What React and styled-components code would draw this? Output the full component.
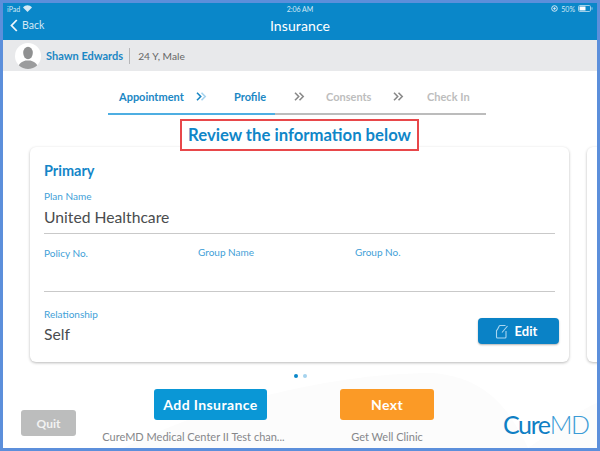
import React from "react";
import styled, { createGlobalStyle } from "styled-components";

const Global = createGlobalStyle`
  html, body { margin: 0; padding: 0; background: #fff; }
  body { font-family: "Lato", "Liberation Sans", sans-serif; }
  * { box-sizing: border-box; }
`;

const Frame = styled.div`
  width: 600px; height: 451px; border: 3px solid #5c8fdb; overflow: hidden;
  display: flex; flex-direction: column; position: relative;
  background: #fff;
`;
const Decor = styled.svg`
  position: absolute; left: 0; bottom: 0; width: 594px; height: 90px; pointer-events: none;
`;
const Header = styled.header`
  height: 37px; background: #0a87c9; color: #fff; flex: none; padding: 0 6px;
  display: flex; flex-direction: column; position: relative;
`;
const Status = styled.div`
  height: 11px; display: grid; grid-template-columns: 1fr auto 1fr; align-items: center;
  font-size: 7px; color: #d5e9f5; margin: 0 -2px;
`;
const StatusLeft = styled.div`display: flex; align-items: center; gap: 3px;`;
const StatusRight = styled.div`display: flex; align-items: center; gap: 3px; justify-content: flex-end;`;
const Nav = styled.div`
  flex: 1; display: grid; grid-template-columns: 1fr auto 1fr; align-items: center; padding-bottom: 4px;
`;
const Back = styled.div`display: flex; align-items: center; gap: 4px; font-size: 10.5px; color: #d5e9f5; padding-left: 1px;`;
const Title = styled.div`font-size: 14px; letter-spacing: 0.1px; color: #fff; margin-top: 1px;`;

const PatientBar = styled.div`
  height: 31px; background: #e8e9eb; flex: none; display: flex; align-items: center; padding-left: 12px;
`;
const Avatar = styled.div`
  width: 26px; height: 26px; border-radius: 50%; background: #fff; overflow: hidden; flex: none;
`;
const PatientName = styled.div`
  font-size: 11px; font-weight: 700; color: #1b87c4; margin-left: 5px; padding-right: 6px; line-height: 16px;
`;
const PatientMeta = styled.div`
  font-size: 10.2px; color: #666; border-left: 1px solid #b5b6b8; padding-left: 8px; line-height: 16px;
`;

const Stepper = styled.div`
  margin: 15px 0 0 105px; width: 378px; height: 29px; flex: none; display: grid;
  grid-template-columns: 167px 1fr;
`;
const StepRow = styled.div`
  grid-column: 1 / 3; grid-row: 1; display: flex; align-items: flex-start; height: 27px; padding: 3px 0 0 11px;
`;
const Step = styled.div`
  font-size: 11px; font-weight: 700; color: ${p => (p.$active ? "#1b87c4" : "#bdbdbd")};
  width: ${p => p.$w}px; margin-left: ${p => p.$ml || 0}px; line-height: 15px; white-space: nowrap;
`;
const Chev = styled.svg`flex: none; margin: 3px 0 0 0; width: 11px; height: 9px;`;
const LineOn = styled.div`grid-column: 1; grid-row: 1; align-self: end; height: 2px; background: #4eaee2;`;
const LineOff = styled.div`grid-column: 2; grid-row: 1; align-self: end; height: 2px; background: #bcbcbc;`;

const Notice = styled.div`
  flex: none; align-self: flex-start; margin: 4px 0 0 177px; width: 239px; height: 32px; border: 2px solid #e8474a;
  font-size: 16.7px; font-weight: 700; color: #0f86c8; text-align: center; line-height: 29px; position: relative; z-index: 2; background: #fff;
  white-space: nowrap;
`;
const Carousel = styled.div`
  flex: none; display: flex; gap: 18px; margin: -4px 0 0 27px; height: 215px;
`;
const Card = styled.section`
  width: 539px; flex: none; height: 215px; background: #fff; border-radius: 6px; padding: 15px 14px 0 14px;
  box-shadow: 0 1px 3px rgba(0,0,0,0.28); display: flex; flex-direction: column;
`;
const Peek = styled.div`
  width: 40px; flex: none; height: 215px; background: #fff; border-radius: 6px; box-shadow: 0 1px 3px rgba(0,0,0,0.28);
`;
const CardHead = styled.div`font-size: 14.5px; font-weight: 700; color: #1486c8; line-height: 17px;`;
const Label = styled.div`font-size: 10px; color: #3f9fd8; line-height: 12px; padding-top: ${p => p.$pt || 0}px;`;
const Value = styled.div`font-size: 15.7px; color: #4a4c4e; line-height: 20px; margin-top: ${p => p.$mt || 0}px;`;
const Field = styled.div`
  border-bottom: 1px solid #c9c9c9;
  margin-top: 11px;
  height: 44px;
`;
const Columns = styled.div`
  display: grid; grid-template-columns: 154px 157px 1fr; height: 58px; border-bottom: 1px solid #c9c9c9; padding-top: 12px;
`;
const BottomRow = styled.div`display: flex; justify-content: space-between; margin-top: 16px;`;
const EditButton = styled.div`
  width: 81px; height: 26px; background: #0a82c6; border-radius: 4px; color: #fff; font-size: 13px; font-weight: 700;
  display: flex; align-items: center; justify-content: center; gap: 6px; padding-right: 5px; margin: 10px -4px 0 0; box-shadow: 0 1px 2px rgba(0,0,0,0.3);
`;
const Dots = styled.div`flex: none; display: flex; justify-content: center; gap: 5px; height: 27px; padding: 12px 0 0 0; width: 594px;`;
const Dot = styled.div`
  width: 4px; height: 4px; border-radius: 50%; background: ${p => (p.$on ? "#0a87c9" : "#a5d3ee")};
`;
const Footer = styled.footer`
  flex: 1; display: grid; grid-template-columns: 55px 25px 185px 54px 94px 69px 83px; padding-left: 18px; position: relative;
`;
const QuitCell = styled.div`grid-column: 1; padding-top: 21px;`;
const Quit = styled.div`
  width: 55px; height: 26px; background: #bcbdbd; border-radius: 3px; color: #f2f2f2; font-size: 12px; font-weight: 700;
  display: flex; align-items: center; justify-content: center;
`;
const ActionCell = styled.div`
  grid-column: ${p => p.$col}; display: flex; flex-direction: column; align-items: center;
`;
const ActionButton = styled.div`
  width: ${p => p.$w}px; height: 31px; margin-left: ${p => p.$ml || 0}px; background: ${p => p.$bg}; border-radius: 3px; color: #fff; flex: none;
  font-size: 14px; font-weight: 700; display: flex; align-items: center; justify-content: center; letter-spacing: .4px;
`;
const Caption = styled.div`font-size: 11px; color: #85878a; margin-top: 11px; line-height: 12px; white-space: nowrap;`;
const Logo = styled.div`
  grid-column: 7; padding-top: 22px; font-size: 25px; color: #0f7fc4; letter-spacing: -1.4px; line-height: 26px; white-space: nowrap;
  & span { font-weight: 300; color: #3b9bd6; }
`;

const Chevrons = ({ color, fade }) => (
  <Chev viewBox="0 0 11 9" fill="none" strokeWidth="1.6">
    <path d="M1 .8l3.700 3.700L1 8.200" stroke={color} />
    <path d="M5.500 .8l3.700 3.700-3.700 3.700" stroke={fade || color} />
  </Chev>
);

export default function App() {
  return (
    <>
      <Global />
      <Frame>
        <Decor viewBox="0 0 594 90" fill="none">
          <path d="M120 90C220 40 340 15 430 15C490 20 510 60 525 90Z" fill="#fcfcfc" />
          <path d="M525 90C555 70 580 50 594 45V90Z" fill="#fcfcfc" />
        </Decor>
        <Header>
          <Status>
            <StatusLeft>
              iPad
              <svg width="9" height="7" viewBox="0 0 9 7" fill="#d5e9f5"><path d="M4.5 7L0 2.4C2.6-.4 6.4-.4 9 2.4z" /></svg>
            </StatusLeft>
            <span>2:06 AM</span>
            <StatusRight>
              <svg width="7" height="7" viewBox="0 0 7 7" fill="none" stroke="#d5e9f5"><circle cx="3.5" cy="3.5" r="2.8" /><circle cx="3.5" cy="3.5" r="0.8" fill="#d5e9f5" /></svg>
              50%
              <svg width="15" height="7" viewBox="0 0 15 7" fill="none">
                <rect x=".5" y=".5" width="12" height="6" rx="1.2" stroke="#9fcfe9" />
                <rect x="1.5" y="1.5" width="6" height="4" fill="#fff" />
                <rect x="13.5" y="2.3" width="1" height="2.4" fill="#9fcfe9" />
              </svg>
            </StatusRight>
          </Status>
          <Nav>
            <Back>
              <svg width="8" height="13" viewBox="0 0 8 13" fill="none" stroke="#eef6fb" strokeWidth="1.8"><path d="M6.800 1L1.500 6.500l5.300 5.500" /></svg>
              Back
            </Back>
            <Title>Insurance</Title>
            <span />
          </Nav>
        </Header>
        <PatientBar>
          <Avatar>
            <svg width="26" height="26" viewBox="0 0 26 26">
              <ellipse cx="13" cy="10" rx="4.800" ry="6.200" fill="#8f9091" />
              <path d="M3 26c0-2 0-6 7.500-8.500h5C23 20 23 24 23 26z" fill="#9b9c9d" />
            </svg>
          </Avatar>
          <PatientName>Shawn Edwards</PatientName>
          <PatientMeta>24 Y, Male</PatientMeta>
        </PatientBar>
        <Stepper>
          <LineOn />
          <LineOff />
          <StepRow>
            <Step $active $w={77}>Appointment</Step>
            <Chevrons color="#1b87c4" fade="#a5d3ee" />
            <Step $active $ml={27} $w={60}>Profile</Step>
            <Chevrons color="#8a8a8a" />
            <Step $ml={21} $w={67}>Consents</Step>
            <Chevrons color="#8a8a8a" />
            <Step $ml={23} $w={50}>Check In</Step>
          </StepRow>
        </Stepper>
        <Notice>Review the information below</Notice>
        <Carousel>
          <Card>
            <CardHead>Primary</CardHead>
            <Field>
              <Label>Plan Name</Label>
              <Value $mt={5}>United Healthcare</Value>
            </Field>
            <Columns>
              <Label $pt={1}>Policy No.</Label>
              <Label>Group Name</Label>
              <Label>Group No.</Label>
            </Columns>
            <BottomRow>
              <div>
                <Label>Relationship</Label>
                <Value $mt={4}>Self</Value>
              </div>
              <EditButton>
                <svg width="14" height="15" viewBox="0 0 14 15" fill="none" stroke="#a9d6f0" strokeWidth="1.1">
                  <path d="M10.500 1.500H5C3.500 1.500 3.500 5.500 1.500 6.500v6.500c0 .5.5 1 1 1H10c.5 0 1-.5 1-1V7" />
                  <path d="M7 8.500l5.500-6.500" />
                </svg>
                Edit
              </EditButton>
            </BottomRow>
          </Card>
          <Peek />
        </Carousel>
        <Dots><Dot $on /><Dot /></Dots>
        <Footer>
          <QuitCell><Quit>Quit</Quit></QuitCell>
          <ActionCell $col={3}>
            <ActionButton $w={113} $ml={34} $bg="#0a97d6">Add Insurance</ActionButton>
            <Caption>CureMD Medical Center II Test chan...</Caption>
          </ActionCell>
          <ActionCell $col={5}>
            <ActionButton $w={94} $bg="#fb9a26">Next</ActionButton>
            <Caption>Get Well Clinic</Caption>
          </ActionCell>
          <Logo>Cure<span>MD</span></Logo>
        </Footer>
      </Frame>
    </>
  );
}
